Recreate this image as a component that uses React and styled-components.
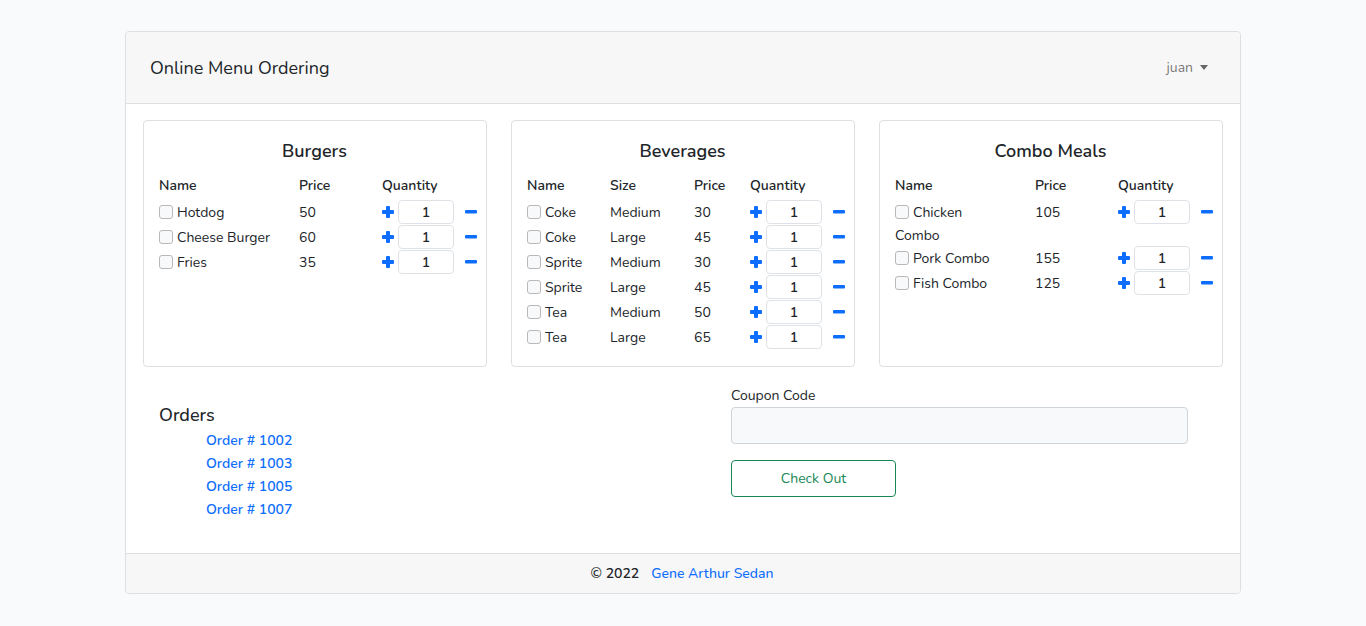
import React from "react";
import styled, { createGlobalStyle } from "styled-components";

const burgers = [
  { name: "Hotdog", price: 50 },
  { name: "Cheese Burger", price: 60 },
  { name: "Fries", price: 35 },
];

const beverages = [
  { name: "Coke", size: "Medium", price: 30 },
  { name: "Coke", size: "Large", price: 45 },
  { name: "Sprite", size: "Medium", price: 30 },
  { name: "Sprite", size: "Large", price: 45 },
  { name: "Tea", size: "Medium", price: 50 },
  { name: "Tea", size: "Large", price: 65 },
];

const combos = [
  { name: "Chicken", wrap: "Combo", price: 105 },
  { name: "Pork Combo", price: 155 },
  { name: "Fish Combo", price: 125 },
];

const orders = [1002, 1003, 1005, 1007];

const PlusIcon = () => (
  <svg width="12" height="12" viewBox="0 0 12 12">
    <rect x="4" y="0" width="4" height="12" rx="1" fill="#0d6efd" />
    <rect x="0" y="4" width="12" height="4" rx="1" fill="#0d6efd" />
  </svg>
);

const MinusIcon = () => (
  <svg width="12" height="4" viewBox="0 0 12 4">
    <rect x="0" y="0" width="12" height="3.5" rx="1" fill="#0d6efd" />
  </svg>
);

const MenuCard = ({ title, items, withSize, columns }) => {
  return (
    <Card>
      <CardTitle>{title}</CardTitle>
      <HeadRow $columns={columns}>
        <span>Name</span>
        {withSize && <span>Size</span>}
        <span>Price</span>
        <span>Quantity</span>
      </HeadRow>
      {items.map((item, index) => (
        <ItemRow key={index} $columns={columns} $wrapped={!!item.wrap}>
          <Cell>
            <Check type="checkbox" />
            {item.name}
            {item.wrap && (
              <>
                <br />
                {item.wrap}
              </>
            )}
          </Cell>
          {withSize && <Cell>{item.size}</Cell>}
          <Cell>{item.price}</Cell>
          <Qty>
            <PlusIcon />
            <QtyInput defaultValue="1" />
            <MinusIcon />
          </Qty>
        </ItemRow>
      ))}
    </Card>
  );
};

const App = () => {
  return (
    <>
      <GlobalStyle />
      <Page>
        <Header>
          <Brand>Online Menu Ordering</Brand>
          <UserMenu>
            juan <Caret />
          </UserMenu>
        </Header>
        <Body>
          <CardGrid>
            <MenuCard title="Burgers" items={burgers} columns="140px 83px 1fr" />
            <MenuCard
              title="Beverages"
              items={beverages}
              withSize
              columns="83px 84px 56px 1fr"
            />
            <MenuCard title="Combo Meals" items={combos} columns="140px 83px 1fr" />
          </CardGrid>
          <Bottom>
            <Orders>
              <OrdersTitle>Orders</OrdersTitle>
              <OrderList>
                {orders.map((o) => (
                  <li key={o}>
                    <OrderLink href="#">Order # {o}</OrderLink>
                  </li>
                ))}
              </OrderList>
            </Orders>
            <Checkout>
              <Label>Coupon Code</Label>
              <CouponInput />
              <CheckOutButton>Check Out</CheckOutButton>
            </Checkout>
          </Bottom>
        </Body>
        <Footer>
          <strong>© 2022</strong>
          <FooterLink href="#">Gene Arthur Sedan</FooterLink>
        </Footer>
      </Page>
    </>
  );
};

const GlobalStyle = createGlobalStyle`
  body {
    margin: 0;
    background: #f8fafc;
    font-family: "Nunito", "Lato", "Noto Sans", sans-serif;
    font-size: 14px;
    color: #212529;
  }
`;

const Page = styled.div`
  width: 1116px;
  margin: 31px auto 0;
  background: #fff;
  border: 1px solid #dfdfdf;
  border-radius: 4px;
  box-sizing: border-box;
`;

const Header = styled.header`
  height: 72px;
  box-sizing: border-box;
  display: flex;
  align-items: center;
  justify-content: space-between;
  padding: 0 32px 0 24px;
  background: #f7f7f7;
  border-bottom: 1px solid #dfdfdf;
  border-radius: 4px 4px 0 0;
`;

const Brand = styled.div`
  font-size: 18px;
  color: #212529;
`;

const UserMenu = styled.div`
  display: flex;
  align-items: center;
  gap: 7px;
  color: rgba(0, 0, 0, 0.55);
  font-size: 14px;
`;

const Caret = styled.span`
  width: 0;
  height: 0;
  border-left: 4.5px solid transparent;
  border-right: 4.5px solid transparent;
  border-top: 5px solid #666;
`;

const Body = styled.main`
  padding: 16px 17px 17px;
`;

const CardGrid = styled.div`
  display: grid;
  grid-template-columns: repeat(3, 344px);
  gap: 24px;
`;

const Card = styled.section`
  border: 1px solid #dfdfdf;
  border-radius: 4px;
  padding: 17px 16px 16px 15px;
  height: 247px;
  box-sizing: border-box;
`;

const CardTitle = styled.h5`
  margin: 0;
  text-align: center;
  font-size: 18px;
  line-height: 27px;
  font-weight: 600;
`;

const HeadRow = styled.div`
  display: grid;
  grid-template-columns: ${(p) => p.$columns};
  margin: 10px 0 3px;
  line-height: 22px;
  font-weight: 600;
`;

const ItemRow = styled.div`
  display: grid;
  grid-template-columns: ${(p) => p.$columns};
  align-items: start;
  min-height: 25px;
  margin-bottom: ${(p) => (p.$wrapped ? "-1px" : "0")};
`;

const Cell = styled.div`
  line-height: 23px;
  padding-top: 1px;
  white-space: nowrap;
`;

const Check = styled.input`
  appearance: none;
  width: 14px;
  height: 14px;
  margin: 0 4px 0 0;
  vertical-align: -2px;
  border: 1px solid #b8b8b8;
  border-radius: 3px;
  background: #f8f9fa;
`;

const Qty = styled.div`
  display: flex;
  align-items: center;
  height: 24px;
  white-space: nowrap;

  svg:first-child {
    margin-right: 4px;
  }
  svg:last-child {
    margin-left: 11px;
  }
`;

const QtyInput = styled.input`
  width: 56px;
  height: 24px;
  box-sizing: border-box;
  border: 1px solid #dee2e6;
  border-radius: 4px;
  text-align: center;
  font-family: inherit;
  font-size: 14px;
  font-weight: 600;
  color: #212529;
  padding: 0;
`;

const Bottom = styled.div`
  display: grid;
  grid-template-columns: 588px 1fr;
  margin-top: 18px;
`;

const Orders = styled.div`
  padding: 17px 16px 15px;
`;

const OrdersTitle = styled.h5`
  margin: 0;
  font-size: 18px;
  line-height: 27px;
  font-weight: 500;
`;

const OrderList = styled.ul`
  list-style: none;
  margin: 0;
  padding-left: 47px;
  line-height: 23px;
`;

const OrderLink = styled.a`
  color: #0d6efd;
  font-weight: 600;
  text-decoration: none;
`;

const Checkout = styled.div`
  padding-right: 35px;
`;

const Label = styled.label`
  display: block;
  line-height: 21px;
  margin-bottom: 1px;
`;

const CouponInput = styled.input`
  display: block;
  width: 100%;
  height: 37px;
  box-sizing: border-box;
  background: #f8f9fa;
  border: 1px solid #ced4da;
  border-radius: 4px;
`;

const CheckOutButton = styled.button`
  margin-top: 16px;
  width: 165px;
  height: 37px;
  background: #fff;
  border: 1px solid #198754;
  border-radius: 4px;
  color: #198754;
  font-family: inherit;
  font-size: 14px;
`;

const Footer = styled.footer`
  height: 40px;
  box-sizing: border-box;
  display: flex;
  align-items: center;
  justify-content: center;
  gap: 12px;
  padding-right: 2px;
  background: #f7f7f7;
  border-top: 1px solid #dfdfdf;
  border-radius: 0 0 4px 4px;

  strong {
    font-weight: 600;
  }
`;

const FooterLink = styled.a`
  color: #0d6efd;
  font-weight: 500;
  text-decoration: none;
`;

export default App;
